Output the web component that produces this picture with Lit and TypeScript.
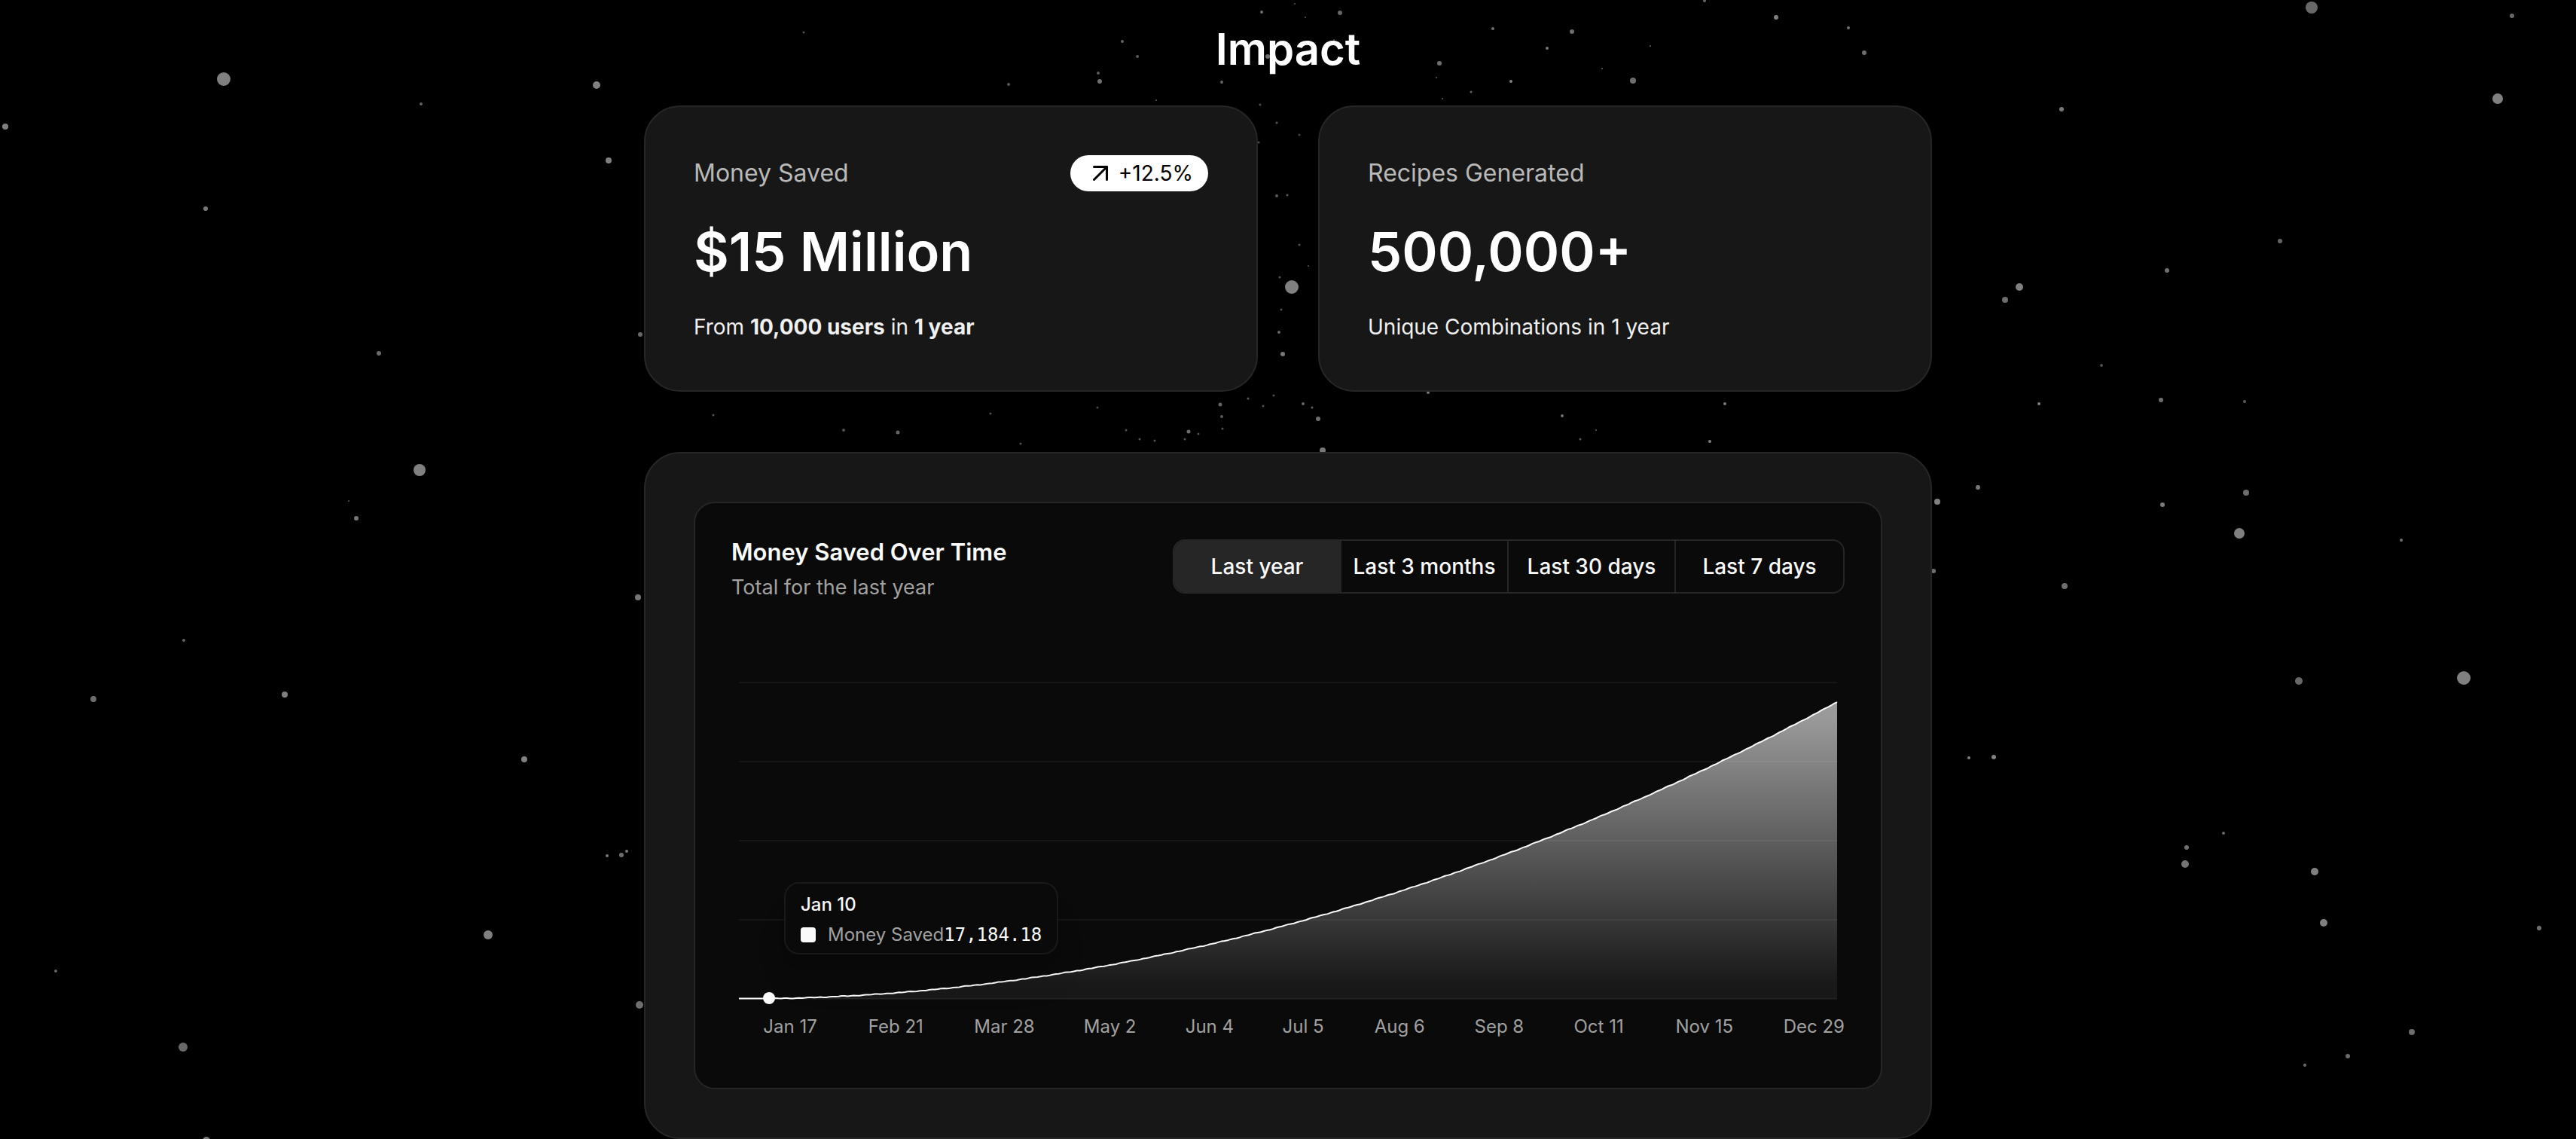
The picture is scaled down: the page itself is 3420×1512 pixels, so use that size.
import { LitElement, html, css, svg } from "lit";
import { customElement, property, state } from "lit/decorators.js";
import { classMap } from "lit/directives/class-map.js";

/* Star field: x, y, radius, brightness (0-255) on a 3420 x 1512 sky. */
const STARS: [number, number, number, number][] = [
  [297, 105, 9, 128], [792, 113, 5, 128], [559, 138, 2, 100], [7, 168, 4, 128],
  [808, 213, 4, 128], [273, 277, 3, 120], [503, 469, 3, 105], [850, 444, 3, 105],
  [557, 624, 8, 128], [463, 665, 1, 90], [473, 688, 3, 118], [847, 793, 4, 118],
  [244, 850, 2, 100], [124, 928, 4, 108], [378, 922, 4, 128], [696, 1008, 4, 128],
  [806, 1136, 2, 120], [825, 1135, 3, 110], [832, 1130, 2, 120], [648, 1241, 6, 128],
  [74, 1289, 2, 100], [849, 1334, 5, 110], [243, 1390, 6, 104], [274, 1514, 5, 118],
  [3069, 10, 8, 104], [3335, 21, 3, 104], [3316, 131, 7, 128], [2737, 145, 3, 120],
  [3027, 320, 3, 100], [2877, 359, 3, 112], [2681, 381, 5, 128], [2662, 398, 4, 108],
  [2790, 485, 2, 80], [2869, 531, 3, 110], [2980, 533, 2, 90], [2707, 536, 2, 128],
  [2626, 647, 3, 120], [2572, 666, 4, 128], [2982, 654, 4, 108], [2871, 670, 3, 124],
  [2973, 708, 7, 128], [3188, 717, 2, 110], [2567, 758, 3, 110], [2741, 778, 4, 110],
  [3052, 904, 5, 104], [3271, 900, 9, 128], [2614, 1006, 2, 128], [2647, 1005, 3, 128],
  [2952, 1106, 2, 104], [2903, 1125, 3, 112], [2901, 1147, 5, 116], [3073, 1157, 5, 128],
  [3085, 1225, 5, 128], [3371, 1232, 3, 112], [3202, 1370, 4, 108], [3117, 1402, 3, 108],
  [3060, 1414, 2, 110], [1067, 43, 1.5, 80], [1490, 55, 2, 100], [1510, 75, 2, 90],
  [1458, 97, 2, 90], [1460, 108, 3, 110], [1339, 112, 2, 90], [1622, 109, 2, 100],
  [1675, 16, 2, 110], [1683, 75, 3, 110], [1535, 133, 1, 90], [1673, 139, 1.5, 80],
  [1695, 163, 1.5, 90], [1671, 189, 1.5, 80], [1695, 260, 2, 90], [1709, 259, 1.5, 90],
  [1699, 368, 1.5, 80], [1715, 381, 9, 128], [1701, 411, 1.5, 80], [1698, 441, 2, 100],
  [1703, 470, 3, 120], [1719, 5, 1, 90], [1733, 23, 1, 90], [1779, 17, 3, 100],
  [1771, 53, 1, 90], [1982, 38, 2, 110], [2087, 42, 3, 108], [2054, 64, 2, 118],
  [2191, 61, 1, 100], [1911, 84, 3, 110], [1907, 103, 1, 100], [1953, 122, 1.5, 100],
  [1915, 131, 1, 100], [2006, 108, 2, 128], [2127, 91, 1, 100], [2168, 107, 4, 110],
  [2263, 1, 2, 100], [2358, 23, 3, 128], [2454, 37, 2, 110], [2475, 70, 3, 110],
  [1725, 179, 1.5, 70], [1725, 325, 1.5, 80], [1737, 353, 1, 90], [1896, 521, 2, 120],
  [1730, 536, 2, 100], [1742, 541, 1.5, 100], [1750, 556, 3, 110], [2074, 552, 2, 110],
  [2119, 571, 1, 100], [2098, 583, 1.5, 90], [2290, 536, 2, 120], [2270, 586, 2, 128],
  [1756, 598, 4, 120], [1691, 525, 1.5, 80], [1657, 529, 1.5, 90], [1677, 539, 1.5, 80],
  [1620, 537, 2.5, 100], [1622, 553, 2, 90], [1457, 541, 1.5, 70], [1315, 549, 1.5, 80],
  [947, 551, 1.5, 80], [1120, 571, 2, 80], [1192, 574, 2.5, 100], [1355, 589, 1.5, 80],
  [1495, 571, 1.5, 80], [1513, 583, 1.5, 80], [1533, 585, 1.5, 80], [1573, 583, 1.5, 80],
  [1578, 573, 2.5, 110], [1591, 576, 1.5, 80], [1623, 569, 1.5, 80],
];

@customElement("star-field")
export class StarField extends LitElement {
  static styles = css`
    :host {
      position: absolute;
      inset: 0;
      overflow: hidden;
    }
    .sky {
      display: block;
      width: 100%;
      height: 100%;
    }
  `;

  render() {
    return html`
      <svg class="sky" viewBox="0 0 3420 1512" preserveAspectRatio="xMidYMin slice" aria-hidden="true">
        ${STARS.map(
          ([x, y, r, v]) => svg`<circle cx=${x} cy=${y} r=${r} fill="rgb(${v},${v},${v})"></circle>`
        )}
      </svg>
    `;
  }
}

@customElement("stat-card")
export class StatCard extends LitElement {
  @property() label = "";
  @property() value = "";
  @property() trend = "";

  static styles = css`
    :host {
      display: flex;
      flex-direction: column;
      gap: 40px;
      padding: 64px;
      border: 2px solid #262626;
      border-radius: 48px;
      background: #171717;
    }
    .head {
      display: flex;
      align-items: center;
      justify-content: space-between;
      height: 48px;
    }
    .label {
      color: #b9b9b9;
      font-size: 32px;
      line-height: 48px;
    }
    .badge {
      display: inline-flex;
      align-items: center;
      gap: 14px;
      height: 48px;
      padding: 0 20px 0 30px;
      box-sizing: border-box;
      border-radius: 24px;
      background: #fff;
      color: #000;
      font-size: 28px;
      line-height: 40px;
    }
    .arrow {
      width: 20px;
      height: 20px;
    }
    .value {
      color: #fff;
      font-size: 72px;
      font-weight: 600;
      line-height: 80px;
    }
    .note {
      color: #f0f0f0;
      font-size: 28px;
      line-height: 40px;
    }
  `;

  render() {
    return html`
      <div class="head">
        <span class="label">${this.label}</span>
        ${this.trend
          ? html`<span class="badge">
              <svg class="arrow" viewBox="0 0 20 20" fill="none" stroke="currentColor"
                stroke-width="3" stroke-linecap="round" stroke-linejoin="round" aria-hidden="true">
                <path d="M1.5 1.5H18.5V18.5"></path>
                <path d="M1.5 18.5 18.5 1.5"></path>
              </svg>
              ${this.trend}
            </span>`
          : null}
      </div>
      <div class="value">${this.value}</div>
      <div class="note"><slot></slot></div>
    `;
  }
}

const DAYS = 364;
const PLOT_WIDTH = 1458;
const PLOT_HEIGHT = 420;
const PEAK = 394;

const TICKS: [string, number][] = [
  ["Jan 17", 17], ["Feb 21", 52], ["Mar 28", 88], ["May 2", 123], ["Jun 4", 156],
  ["Jul 5", 187], ["Aug 6", 219], ["Sep 8", 252], ["Oct 11", 285], ["Nov 15", 320],
];

/* Savings grow with the square of time, with a small daily variation. */
const POINTS = Array.from({ length: DAYS + 1 }, (_, day) => {
  const t = day / DAYS;
  const wobble = 0.3 * Math.sin(day * 1.7) + 0.2 * Math.sin(day * 0.6);
  const h = Math.max(0.6, PEAK * t * t + wobble);
  return `${((day / DAYS) * PLOT_WIDTH).toFixed(1)},${(PLOT_HEIGHT - h).toFixed(1)}`;
}).join(" L");

const RANGES = ["Last year", "Last 3 months", "Last 30 days", "Last 7 days"];

@customElement("savings-chart")
export class SavingsChart extends LitElement {
  @state() private range = RANGES[0];

  static styles = css`
    :host {
      display: flex;
      flex-direction: column;
      gap: 96px;
      padding: 48px;
      border: 2px solid #262626;
      border-radius: 28px;
      background: #0a0a0a;
    }
    .head {
      display: flex;
      align-items: flex-start;
      justify-content: space-between;
      gap: 48px;
    }
    .titles {
      display: flex;
      flex-direction: column;
      gap: 10px;
    }
    .title {
      margin: 0;
      color: #fafafa;
      font-size: 31px;
      font-weight: 600;
      line-height: 34px;
    }
    .sub {
      margin: 0;
      color: #a1a1a1;
      font-size: 27px;
      line-height: 40px;
    }
    .ranges {
      display: grid;
      grid-template-columns: repeat(4, 1fr);
      width: 892px;
      height: 72px;
      box-sizing: border-box;
      border: 2px solid #262626;
      border-radius: 16px;
      overflow: hidden;
    }
    .range {
      padding: 0;
      border: 0;
      border-right: 2px solid #262626;
      background: transparent;
      color: #fafafa;
      font-family: inherit;
      font-size: 28px;
      font-weight: 500;
      line-height: 40px;
      white-space: nowrap;
      cursor: pointer;
    }
    .range:last-child {
      border-right: 0;
    }
    .range.on {
      background: #262626;
    }
    .plot {
      position: relative;
      height: 420px;
      padding: 10px 10px 70px;
    }
    .graph {
      display: block;
      width: 100%;
      height: 420px;
      overflow: visible;
    }
    .grid {
      stroke: #fff;
      stroke-opacity: 0.05;
      stroke-width: 2;
    }
    .line {
      fill: none;
      stroke: #fafafa;
      stroke-width: 2;
    }
    .dot {
      fill: #fafafa;
    }
    .tick {
      fill: #a1a1a1;
      font-size: 24px;
      text-anchor: middle;
    }
    .tick.last {
      text-anchor: end;
    }
    .tip {
      position: absolute;
      left: 70px;
      top: 275px;
      display: flex;
      flex-direction: column;
      gap: 12px;
      padding: 12px 20px;
      border: 2px solid #191919;
      border-radius: 20px;
      background: #0a0a0a;
      box-shadow: 0 40px 50px -10px rgba(0, 0, 0, 0.1), 0 16px 20px -12px rgba(0, 0, 0, 0.1);
      font-size: 24px;
    }
    .tip-title {
      color: #fafafa;
      font-weight: 500;
      line-height: 32px;
    }
    .tip-row {
      display: flex;
      align-items: center;
      height: 24px;
      line-height: 24px;
    }
    .swatch {
      width: 20px;
      height: 20px;
      margin-right: 16px;
      border-radius: 4px;
      background: #fafafa;
    }
    .tip-name {
      color: #a1a1a1;
    }
    .tip-value {
      color: #fafafa;
      font-family: "DejaVu Sans Mono", "Liberation Mono", monospace;
    }
  `;

  render() {
    return html`
      <div class="head">
        <div class="titles">
          <h2 class="title">Money Saved Over Time</h2>
          <p class="sub">Total for the last year</p>
        </div>
        <div class="ranges" role="group" aria-label="Time range">
          ${RANGES.map(
            (name) => html`<button
              type="button"
              class=${classMap({ range: true, on: name === this.range })}
              aria-pressed=${name === this.range ? "true" : "false"}
              @click=${() => (this.range = name)}
            >${name}</button>`
          )}
        </div>
      </div>
      <div class="plot">
        <svg class="graph">
          ${[0, 105, 210, 315, 420].map(
            (y) => svg`<line class="grid" x1="0" x2="100%" y1=${y} y2=${y}></line>`
          )}
          <svg width="100%" height="420" viewBox="0 0 1458 420" preserveAspectRatio="none" overflow="visible">
            <defs>
              <linearGradient id="fill" x1="0" y1="0" x2="0" y2="1">
                <stop offset="5%" stop-color="#fafafa" stop-opacity="1"></stop>
                <stop offset="95%" stop-color="#fafafa" stop-opacity="0.1"></stop>
              </linearGradient>
            </defs>
            <path d="M${POINTS} L1458,420 L0,420 Z" fill="url(#fill)" fill-opacity="0.6"></path>
            <path class="line" d="M${POINTS}" vector-effect="non-scaling-stroke"></path>
          </svg>
          <circle class="dot" cx="${(10 / DAYS) * 100}%" cy="419" r="8"></circle>
          ${TICKS.map(
            ([name, day]) => svg`<text class="tick" x="${(day / DAYS) * 100}%" y="465">${name}</text>`
          )}
          <svg x="10" width="100%" height="500" overflow="visible">
            <text class="tick last" x="100%" y="465">Dec 29</text>
          </svg>
        </svg>
        <div class="tip">
          <div class="tip-title">Jan 10</div>
          <div class="tip-row">
            <span class="swatch"></span>
            <span class="tip-name">Money Saved</span>
            <span class="tip-value">17,184.18</span>
          </div>
        </div>
      </div>
    `;
  }
}

@customElement("app-root")
export class AppRoot extends LitElement {
  static styles = css`
    :host {
      display: block;
      position: relative;
      min-height: 100vh;
      overflow: hidden;
      background: #000;
      color: #fff;
      font-family: Inter, "Liberation Sans", sans-serif;
    }
    .page {
      position: relative;
      width: calc(100% - 80px);
      max-width: 1710px;
      margin: 0 auto;
      padding-top: 30px;
    }
    .heading {
      margin: 0 0 40px;
      font-size: 58px;
      font-weight: 600;
      line-height: 70px;
      text-align: center;
    }
    .stats {
      display: grid;
      grid-template-columns: 1fr 1fr;
      gap: 80px;
      margin-bottom: 80px;
    }
    .panel {
      padding: 64px;
      border: 2px solid #262626;
      border-radius: 48px;
      background: #171717;
    }
  `;

  render() {
    return html`
      <star-field></star-field>
      <main class="page">
        <h1 class="heading">Impact</h1>
        <div class="stats">
          <stat-card label="Money Saved" value="$15 Million" trend="+12.5%"
            >From <b>10,000 users</b> in <b>1 year</b></stat-card
          >
          <stat-card label="Recipes Generated" value="500,000+"
            >Unique Combinations in 1 year</stat-card
          >
        </div>
        <section class="panel">
          <savings-chart></savings-chart>
        </section>
      </main>
    `;
  }
}
